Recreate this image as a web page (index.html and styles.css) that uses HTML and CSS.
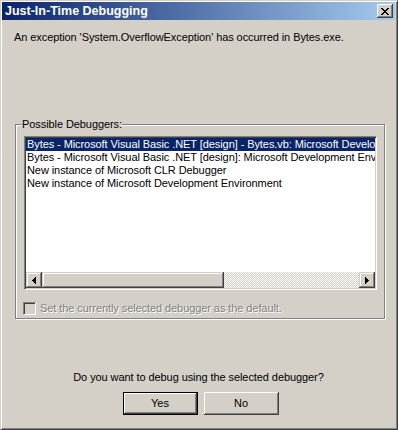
FILE: index.html
```html
<!DOCTYPE html>
<html lang="en">
  <head>
    <meta charset="UTF-8" />
    <title>Just-In-Time Debugging</title>
    <link rel="stylesheet" href="styles.css">
  </head>
  <body>
    <div class="window">
      <div class="titlebar">
        <span class="title">Just-In-Time Debugging</span>
        <button class="close" aria-label="Close">
          <svg width="8" height="7" viewBox="0 0 8 7" shape-rendering="crispEdges">
            <path d="M0 0h2v1h-2zM6 0h2v1h-2zM1 1h2v1h-2zM5 1h2v1h-2zM2 2h4v1h-4zM3 3h2v1h-2zM2 4h4v1h-4zM1 5h2v1h-2zM5 5h2v1h-2zM0 6h2v1h-2zM6 6h2v1h-2z" fill="#000"/>
          </svg>
        </button>
      </div>

      <div class="dialog">
        <p class="message">An exception 'System.OverflowException' has occurred in Bytes.exe.</p>

        <fieldset class="group">
          <legend>Possible Debuggers:</legend>
          <div class="listbox">
            <ul class="items">
              <li class="selected">Bytes - Microsoft Visual Basic .NET [design] - Bytes.vb: Microsoft Development Environment</li>
              <li>Bytes - Microsoft Visual Basic .NET [design]: Microsoft Development Environment</li>
              <li>New instance of Microsoft CLR Debugger</li>
              <li>New instance of Microsoft Development Environment</li>
            </ul>
            <div class="hscroll">
              <span class="sb-btn">
                <svg width="4" height="7" viewBox="0 0 4 7" shape-rendering="crispEdges"><path d="M3 0h1v7h-1zM2 1h1v5h-1zM1 2h1v3h-1zM0 3h1v1h-1z" fill="#000"/></svg>
              </span>
              <span class="sb-thumb"></span>
              <span class="sb-track"></span>
              <span class="sb-btn">
                <svg width="4" height="7" viewBox="0 0 4 7" shape-rendering="crispEdges"><path d="M0 0h1v7h-1zM1 1h1v5h-1zM2 2h1v3h-1zM3 3h1v1h-1z" fill="#000"/></svg>
              </span>
            </div>
          </div>
          <label class="check disabled"><span class="box"></span>Set the currently selected debugger as the default.</label>
        </fieldset>

        <p class="question">Do you want to debug using the selected debugger?</p>

        <div class="buttons">
          <button class="btn default">Yes</button>
          <button class="btn">No</button>
        </div>
      </div>
    </div>
  </body>
</html>
```

FILE: styles.css
```css
html,
body {
  margin: 0;
  padding: 0;
}

body {
  font-family: "Liberation Sans", Arial, sans-serif;
  font-size: 11px;
  line-height: 13px;
  letter-spacing: -0.08px;
  color: #000;
  background: #d4d0c8;
}

.window {
  box-sizing: border-box;
  width: 398px;
  height: 430px;
  padding: 1px 2px 2px 1px;
  background: #d4d0c8;
  border: 1px solid;
  border-color: #d4d0c8 #404040 #404040 #d4d0c8;
  box-shadow: inset 1px 1px #fff, inset -1px -1px #808080;
}

.titlebar {
  display: flex;
  align-items: center;
  justify-content: space-between;
  height: 18px;
  padding: 0 2px 0 3px;
  background: linear-gradient(to right, #0a246a, #a6caf0);
}

.title {
  color: #fff;
  font-size: 12.5px;
  font-weight: bold;
  letter-spacing: 0;
}

.close {
  display: flex;
  align-items: center;
  justify-content: center;
  width: 16px;
  height: 14px;
  padding: 0;
  margin: 0;
  border: none;
  background: #d4d0c8;
  box-shadow: inset -1px -1px #404040, inset 1px 1px #fff, inset -2px -2px #808080;
}

.dialog {
  display: flex;
  flex-direction: column;
}

.message {
  margin: 11px 0 0 12px;
}

/* group box */
.group {
  margin: 74px 10px 0 13px;
  padding: 5px 7px 3px 6px;
  border: 1px solid #808080;
  box-shadow: inset 1px 1px #fff, 1px 1px #fff;
}

.group legend {
  padding: 0;
  background: #d4d0c8;
}

.listbox {
  box-sizing: border-box;
  display: flex;
  flex-direction: column;
  width: 353px;
  height: 154px;
  margin-left: 2px;
  background: #fff;
  border: 1px solid;
  border-color: #808080 #fff #fff #808080;
  box-shadow: inset 1px 1px #404040, inset -1px -1px #d4d0c8;
  padding: 1px;
}

.items {
  flex: 1;
  list-style: none;
  margin: 0;
  padding: 0;
  overflow: hidden;
}

.items li {
  height: 13px;
  padding-left: 1px;
  white-space: nowrap;
}

.items li.selected {
  background: #0a246a;
  color: #fff;
}

.hscroll {
  display: flex;
  height: 16px;
}

.sb-btn,
.sb-thumb {
  box-sizing: border-box;
  background: #d4d0c8;
  box-shadow: inset -1px -1px #404040, inset 1px 1px #d4d0c8, inset -2px -2px #808080, inset 2px 2px #fff;
}

.sb-btn {
  display: flex;
  align-items: center;
  justify-content: center;
  width: 16px;
}

.sb-thumb {
  width: 182px;
}

.sb-track {
  flex: 1;
  background: conic-gradient(#d4d0c8 25%, #fff 0 50%, #d4d0c8 0 75%, #fff 0) 0 0 / 2px 2px;
}

.check {
  display: flex;
  align-items: center;
  gap: 4px;
  margin: 12px 0 0 1px;
}

.box {
  box-sizing: border-box;
  width: 13px;
  height: 13px;
  background: #d4d0c8;
  border: 1px solid;
  border-color: #808080 #fff #fff #808080;
  box-shadow: inset 1px 1px #404040, inset -1px -1px #d4d0c8;
}

.check.disabled {
  color: #808080;
  text-shadow: 1px 1px #fff;
}

.question {
  margin: 52px 0 0;
  text-align: center;
}

.buttons {
  display: flex;
  justify-content: center;
  gap: 6px;
  margin-top: 8px;
  padding-left: 4px;
}

.btn {
  box-sizing: border-box;
  width: 75px;
  height: 23px;
  margin: 0;
  padding: 0;
  font: inherit;
  color: #000;
  background: #d4d0c8;
  border: none;
  box-shadow: inset -1px -1px #404040, inset 1px 1px #fff, inset -2px -2px #808080;
}

.btn.default {
  border: 1px solid #000;
}
```
